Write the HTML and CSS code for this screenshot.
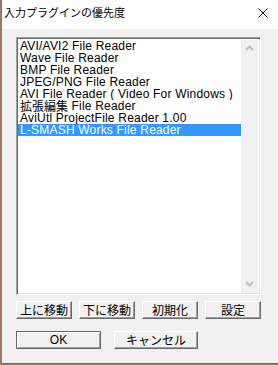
FILE: index.html
```html
<!DOCTYPE html>
<html lang="ja">

<head>
     <meta charset="UTF-8">
     <title>入力プラグインの優先度</title>
     <link rel="stylesheet" href="styles.css">
</head>

<body>
     <div class="window">
          <div class="titlebar">
               <span class="title">入力プラグインの優先度</span>
               <svg class="close" width="10" height="10" viewBox="0 0 10 10">
                    <path d="M0.5 0.5 L9.5 9.5 M9.5 0.5 L0.5 9.5" stroke="#000" stroke-width="1" fill="none" />
               </svg>
          </div>

          <div class="content">
               <div class="listbox">
                    <ul class="items">
                         <li>AVI/AVI2 File Reader</li>
                         <li>Wave File Reader</li>
                         <li>BMP File Reader</li>
                         <li>JPEG/PNG File Reader</li>
                         <li>AVI File Reader ( Video For Windows )</li>
                         <li><span class="jp">拡張編集</span> File Reader</li>
                         <li>AviUtl ProjectFile Reader 1.00</li>
                         <li class="selected">L-SMASH Works File Reader</li>
                    </ul>
                    <div class="scrollbar">
                         <svg width="9" height="6" viewBox="0 0 9 6">
                              <path d="M1 5 L4.5 1.5 L8 5" stroke="#bfbfbf" stroke-width="2" fill="none" />
                         </svg>
                         <svg width="9" height="6" viewBox="0 0 9 6">
                              <path d="M1 1 L4.5 4.5 L8 1" stroke="#bfbfbf" stroke-width="2" fill="none" />
                         </svg>
                    </div>
               </div>

               <div class="row row-move">
                    <button class="btn">上に移動</button>
                    <button class="btn">下に移動</button>
                    <button class="btn">初期化</button>
                    <button class="btn">設定</button>
               </div>

               <div class="row row-ok">
                    <button class="btn btn-ok">OK</button>
                    <button class="btn btn-cancel">キャンセル</button>
               </div>
          </div>
     </div>
</body>

</html>
```

FILE: styles.css
```css
body {
     margin: 0;
     padding: 0;
     background-color: #9a7a6a;
     font-family: "Liberation Sans", "Noto Sans CJK JP", sans-serif;
}

.window {
     width: 277px;
     height: 364px;
     margin-left: 1px;
     border-left: 1px solid #7a7a7a;
     border-bottom: 1px solid #6b6b6b;
     background-color: #f0f0f0;
     box-sizing: border-box;
}

.titlebar {
     height: 29px;
     background-color: #fff;
     display: flex;
     align-items: center;
     justify-content: space-between;
     padding: 0 10px 0 2px;
}

.title {
     font-family: "Noto Sans CJK JP", sans-serif;
     font-size: 11px;
     color: #000;
     margin-top: -5px;
}

.close {
     margin-top: -3px;
}

.content {
     padding: 8px 0 0 14px;
}

.listbox {
     width: 245px;
     height: 258px;
     box-sizing: border-box;
     border: 1px solid;
     border-color: #a0a0a0 #fff #fff #a0a0a0;
     box-shadow: inset 1px 1px 0 #696969, inset -1px -1px 0 #e3e3e3;
     background-color: #fff;
     display: flex;
     padding: 2px 2px 1px 1px;
}

.items {
     list-style: none;
     margin: 0;
     padding: 0;
     flex: 1;
}

.items li {
     height: 12px;
     line-height: 12px;
     font-size: 12px;
     letter-spacing: 0.2px;
     padding-left: 2px;
     color: #000;
     white-space: nowrap;
     overflow: hidden;
}

.items .jp {
     font-family: "Noto Sans CJK JP", sans-serif;
     font-size: 12px;
     line-height: 12px;
     letter-spacing: 0;
     vertical-align: top;
}

.items .selected {
     background-color: #3399ff;
     color: #fff;
}

.scrollbar {
     width: 17px;
     background-color: #f0f0f0;
     display: flex;
     flex-direction: column;
     justify-content: space-between;
     align-items: center;
     padding: 5px 0 6px;
     box-sizing: border-box;
}

.row {
     display: flex;
}

.row-move {
     margin-top: 6px;
     gap: 7px;
}

.row-ok {
     margin-top: 12px;
     gap: 13px;
}

.btn {
     height: 18px;
     width: 56px;
     padding: 0;
     margin: 0;
     font-family: "Noto Sans CJK JP", sans-serif;
     font-size: 12px;
     line-height: 14px;
     color: #000;
     background-color: #f0f0f0;
     border: 1px solid;
     border-color: #fff #696969 #696969 #fff;
     box-shadow: inset -1px -1px 0 #a0a0a0;
     box-sizing: border-box;
}

.btn-ok {
     width: 85px;
     border-color: #696969;
     box-shadow: inset 1px 1px 0 #fff, inset -1px -1px 0 #a0a0a0;
     font-family: "Liberation Sans", sans-serif;
}

.btn-cancel {
     width: 84px;
}
```
